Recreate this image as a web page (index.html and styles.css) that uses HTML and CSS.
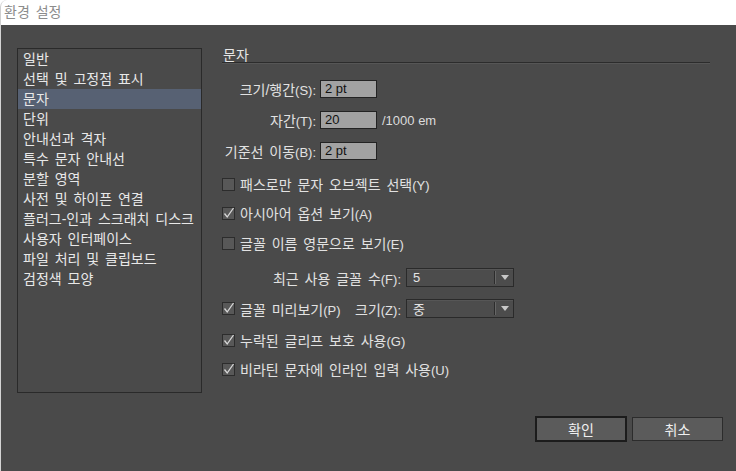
FILE: index.html
```html
<!DOCTYPE html>
<html lang="ko">
<head>
<meta charset="utf-8">
<title>환경 설정</title>
<link rel="stylesheet" href="styles.css">
</head>
<body>
<div class="window">
  <div class="titlebar"><span class="title">환경 설정</span></div>
  <div class="body">
    <div class="main">
      <ul class="nav">
        <li>일반</li>
        <li>선택 및 고정점 표시</li>
        <li class="active">문자</li>
        <li>단위</li>
        <li>안내선과 격자</li>
        <li>특수 문자 안내선</li>
        <li>분할 영역</li>
        <li>사전 및 하이픈 연결</li>
        <li>플러그-인과 스크래치 디스크</li>
        <li>사용자 인터페이스</li>
        <li>파일 처리 및 클립보드</li>
        <li>검정색 모양</li>
      </ul>
      <section class="panel">
        <h2 class="heading">문자</h2>
        <div class="fields">
          <div class="field"><span class="field-label">크기/행간<span class="key">(S):</span></span><span class="input">2 pt</span></div>
          <div class="field"><span class="field-label">자간<span class="key">(T):</span></span><span class="input">20</span><span class="unit">/1000 em</span></div>
          <div class="field"><span class="field-label">기준선 이동<span class="key">(B):</span></span><span class="input">2 pt</span></div>
        </div>
        <div class="opt gap-14"><span class="box"></span><span>패스로만 문자 오브젝트 선택<span class="key">(Y)</span></span></div>
        <div class="opt gap-9"><span class="box"><svg class="tick" width="13" height="13" viewBox="0 0 13 13"><path d="M2.5 6.5 L5.2 10 L11.5 1" fill="none" stroke="#d8d8d8" stroke-width="1.3"/></svg></span><span>아시아어 옵션 보기<span class="key">(A)</span></span></div>
        <div class="opt gap-10"><span class="box"></span><span>글꼴 이름 영문으로 보기<span class="key">(E)</span></span></div>
        <div class="select-row gap-15">
          <span class="select-label">최근 사용 글꼴 수<span class="key">(F):</span></span>
          <span class="select"><span class="select-value">5</span><span class="sep"></span><span class="arrow"></span></span>
        </div>
        <div class="select-row gap-12">
          <span class="select-left">
            <span class="opt-inline"><span class="box"><svg class="tick" width="13" height="13" viewBox="0 0 13 13"><path d="M2.5 6.5 L5.2 10 L11.5 1" fill="none" stroke="#d8d8d8" stroke-width="1.3"/></svg></span><span>글꼴 미리보기<span class="key">(P)</span></span></span>
            <span class="size-label">크기<span class="key">(Z):</span></span>
          </span>
          <span class="select"><span class="select-value">중</span><span class="sep"></span><span class="arrow"></span></span>
        </div>
        <div class="opt gap-12"><span class="box"><svg class="tick" width="13" height="13" viewBox="0 0 13 13"><path d="M2.5 6.5 L5.2 10 L11.5 1" fill="none" stroke="#d8d8d8" stroke-width="1.3"/></svg></span><span>누락된 글리프 보호 사용<span class="key">(G)</span></span></div>
        <div class="opt gap-9"><span class="box"><svg class="tick" width="13" height="13" viewBox="0 0 13 13"><path d="M2.5 6.5 L5.2 10 L11.5 1" fill="none" stroke="#d8d8d8" stroke-width="1.3"/></svg></span><span>비라틴 문자에 인라인 입력 사용<span class="key">(U)</span></span></div>
      </section>
    </div>
    <div class="actions">
      <button class="btn btn-default">확인</button>
      <button class="btn">취소</button>
    </div>
  </div>
</div>
</body>
</html>
```

FILE: styles.css
```css
* { box-sizing: border-box; }
html, body { margin: 0; padding: 0; }
body {
  width: 736px;
  height: 471px;
  overflow: hidden;
  font-family: "Liberation Sans", "Noto Sans CJK KR", sans-serif;
  font-size: 14px;
  word-spacing: 2px;
  color: #e2e2e2;
  background: #ffffff;
}
.key { font-size: 13px; word-spacing: 0; }
.window { width: 736px; height: 471px; display: flex; flex-direction: column; }
.titlebar {
  height: 25px;
  background: #ffffff;
  border-top-left-radius: 7px;
  border-left: 1px solid #d0d0d0;
  padding-left: 3px;
  line-height: 25px;
}
.title { color: #8c8c8c; font-size: 14px; }
.body {
  flex: 1;
  background: #4a4a4a;
  border-left: 1px solid #d4d4d4;
  padding: 23px 13px 0 16px;
  display: flex;
  flex-direction: column;
}
.main { display: flex; height: 345px; }
.nav {
  list-style: none;
  margin: 0;
  padding: 0;
  width: 185px;
  height: 345px;
  border: 1px solid #2a2a2a;
}
.nav li {
  height: 20px;
  line-height: 20px;
  padding-left: 5px;
  color: #e8e8e8;
  white-space: nowrap;
}
.nav li.active { background: #576173; }
.panel { margin-left: 20px; width: 488px; }
.heading {
  margin: 0;
  font-size: 14px;
  font-weight: normal;
  height: 15px;
  line-height: 14px;
  padding-left: 1px;
  border-bottom: 1px solid #2c2c2c;
  box-shadow: 0 1px 0 #565656;
  color: #e6e6e6;
}
.fields { margin-top: 17px; }
.field { display: flex; align-items: center; height: 18px; }
.field + .field { margin-top: 13px; }
.field-label { width: 94px; text-align: right; margin-right: 4px; white-space: nowrap; }
.input {
  width: 57px;
  height: 18px;
  border: 1px solid #232323;
  background: #a2a2a2;
  color: #111111;
  padding-left: 4px;
  font-size: 13px;
  line-height: 16px;
  word-spacing: 0;
}
.unit { margin-left: 5px; word-spacing: 0; font-size: 13px; color: #dcdcdc; }
.opt, .opt-inline { display: flex; align-items: center; height: 20px; white-space: nowrap; }
.box {
  position: relative;
  width: 13px;
  height: 13px;
  border: 1px solid #2c2c2c;
  background: #585858;
  margin-right: 5px;
  flex-shrink: 0;
}
.tick { position: absolute; left: -1px; top: -1px; overflow: visible; }
.gap-9 { margin-top: 9px; }
.gap-10 { margin-top: 10px; }
.gap-12 { margin-top: 12px; }
.gap-14 { margin-top: 14px; }
.gap-15 { margin-top: 15px; }
.select-row { display: flex; align-items: center; height: 19px; }
.select-label { width: 179px; margin-right: 5px; text-align: right; white-space: nowrap; }
.select-left { width: 179px; margin-right: 5px; display: flex; align-items: center; }
.size-label { margin-left: auto; white-space: nowrap; }
.select {
  position: relative;
  width: 108px;
  height: 19px;
  border: 1px solid #2a2a2a;
  background: #4c4c4c;
  box-shadow: inset 0 1px 0 #565656;
  display: flex;
  align-items: center;
}
.select-value { padding-left: 6px; color: #e4e4e4; font-size: 13px; flex: 1; }
.sep {
  width: 2px;
  height: 13px;
  border-left: 1px solid #2c2c2c;
  border-right: 1px solid #666666;
  margin-right: 5px;
}
.arrow {
  width: 0;
  height: 0;
  border-left: 4px solid transparent;
  border-right: 4px solid transparent;
  border-top: 5px solid #c8c8c8;
  margin-right: 4px;
}
.actions {
  margin-top: 23px;
  display: flex;
  justify-content: flex-end;
  align-items: center;
  gap: 5px;
}
.btn {
  font-family: "Liberation Sans", "Noto Sans CJK KR", sans-serif;
  font-size: 14px;
  color: #f0f0f0;
  background: #5b5b5b;
  border: 1px solid #2c2c2c;
  width: 91px;
  height: 24px;
  padding: 0;
  word-spacing: 3px;
}
.btn-default { width: 92px; height: 26px; border: 2px solid #1c1c1c; }
```
